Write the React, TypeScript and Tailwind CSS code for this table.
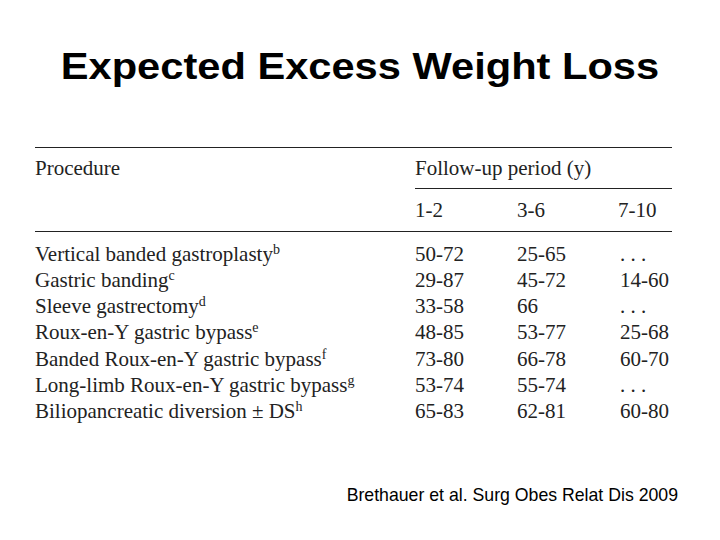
const rows = [
  { name: 'Vertical banded gastroplasty', sup: 'b', a: '50-72', b: '25-65', c: '. . .' },
  { name: 'Gastric banding', sup: 'c', a: '29-87', b: '45-72', c: '14-60' },
  { name: 'Sleeve gastrectomy', sup: 'd', a: '33-58', b: '66', c: '. . .' },
  { name: 'Roux-en-Y gastric bypass', sup: 'e', a: '48-85', b: '53-77', c: '25-68' },
  { name: 'Banded Roux-en-Y gastric bypass', sup: 'f', a: '73-80', b: '66-78', c: '60-70' },
  { name: 'Long-limb Roux-en-Y gastric bypass', sup: 'g', a: '53-74', b: '55-74', c: '. . .' },
  { name: 'Biliopancreatic diversion \u00b1 DS', sup: 'h', a: '65-83', b: '62-81', c: '60-80' },
];

export default function App() {
  return (
    <div className="w-[720px] h-[540px] bg-white overflow-hidden flex flex-col">
      <h1 className="pt-[48px] text-center text-[37px] leading-[37px] font-bold text-black font-['Liberation_Sans',Arial,sans-serif]">
        <span className="inline-block scale-x-[1.125]">Expected Excess Weight Loss</span>
      </h1>

      <div className="ml-[35px] mt-[62px] w-[637px] border-t border-[#222] text-[21px] leading-[26.3px] text-[#222] font-['Liberation_Serif','Times_New_Roman',serif]">
        <div className="flex border-b border-[#222]">
          <div className="w-[380px] pt-[6.5px]">Procedure</div>
          <div className="flex-1">
            <div className="pt-[6.5px] pb-[7px] border-b border-[#222]">Follow-up period (y)</div>
            <div className="flex pt-[8px] pb-[8px]">
              <div className="w-[102px]">1-2</div>
              <div className="w-[101px]">3-6</div>
              <div className="flex-1">7-10</div>
            </div>
          </div>
        </div>

        <div className="pt-[8.5px]">
          {rows.map((r) => (
            <div key={r.name} className="flex">
              <div className="w-[380px] whitespace-nowrap">
                {r.name}
                <sup className="text-[14px]">{r.sup}</sup>
              </div>
              <div className="w-[102px]">{r.a}</div>
              <div className="w-[101px]">{r.b}</div>
              <div className="flex-1 pl-[2px]">{r.c}</div>
            </div>
          ))}
        </div>
      </div>

      <div className="mt-[60px] pr-[42px] flex justify-end text-[17.7px] leading-[20px] text-black font-['Liberation_Sans',Arial,sans-serif]">
        Brethauer et al. Surg Obes Relat Dis 2009
      </div>
    </div>
  );
}
